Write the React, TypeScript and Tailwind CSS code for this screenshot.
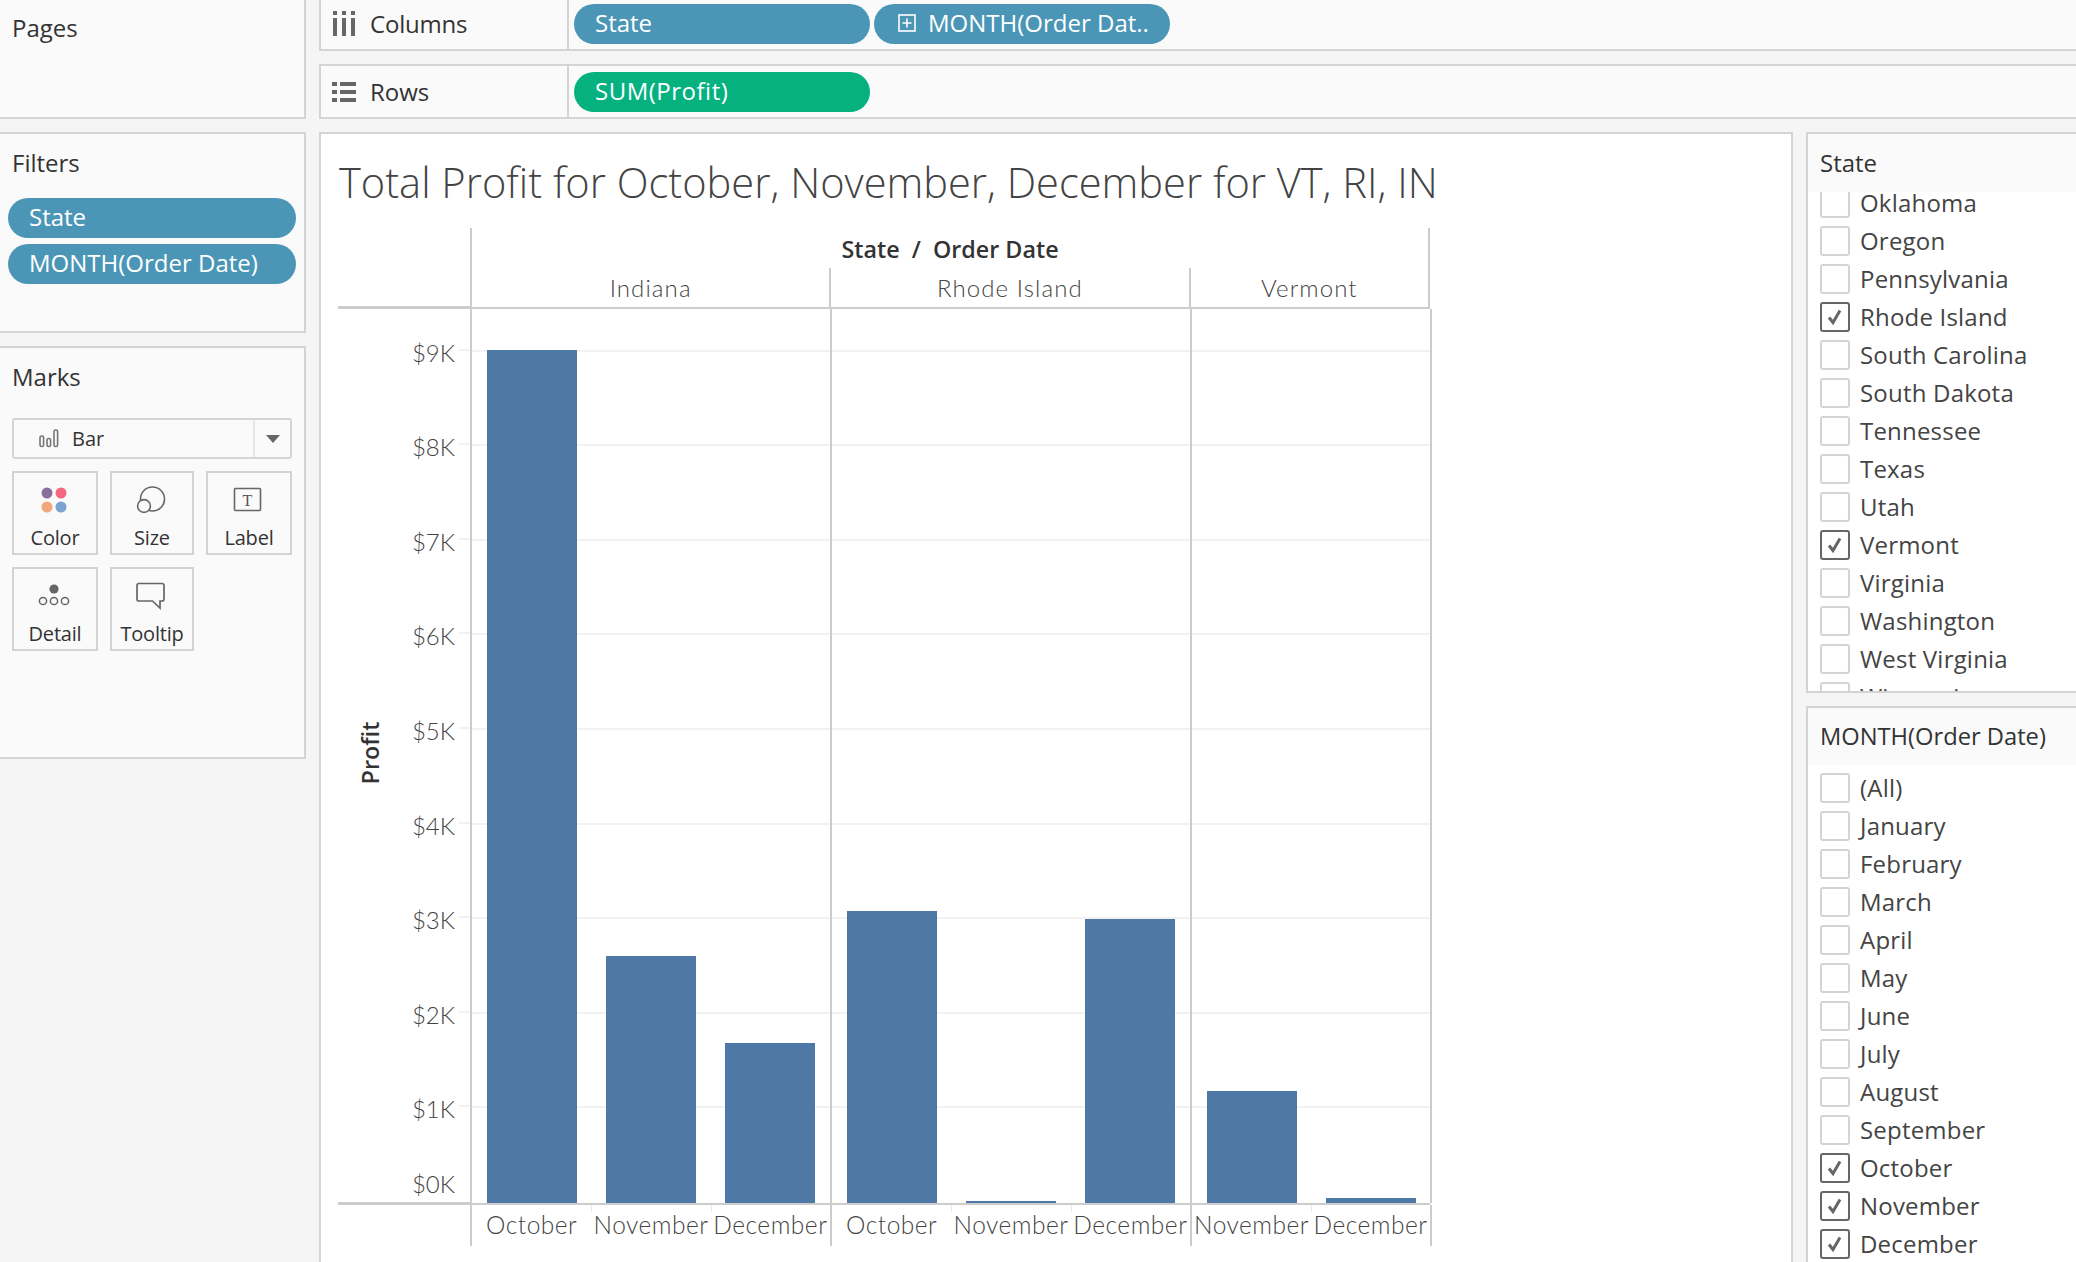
import React from 'react';

const stateRows = [
  { name: 'Oklahoma', on: false },
  { name: 'Oregon', on: false },
  { name: 'Pennsylvania', on: false },
  { name: 'Rhode Island', on: true },
  { name: 'South Carolina', on: false },
  { name: 'South Dakota', on: false },
  { name: 'Tennessee', on: false },
  { name: 'Texas', on: false },
  { name: 'Utah', on: false },
  { name: 'Vermont', on: true },
  { name: 'Virginia', on: false },
  { name: 'Washington', on: false },
  { name: 'West Virginia', on: false },
  { name: 'Wisconsin', on: false },
];

const monthRows = [
  { name: '(All)', on: false },
  { name: 'January', on: false },
  { name: 'February', on: false },
  { name: 'March', on: false },
  { name: 'April', on: false },
  { name: 'May', on: false },
  { name: 'June', on: false },
  { name: 'July', on: false },
  { name: 'August', on: false },
  { name: 'September', on: false },
  { name: 'October', on: true },
  { name: 'November', on: true },
  { name: 'December', on: true },
];

const panes = [
  { name: 'Indiana', width: 360, bars: [{ m: 'October', h: 853 }, { m: 'November', h: 247 }, { m: 'December', h: 160 }] },
  { name: 'Rhode Island', width: 360, bars: [{ m: 'October', h: 292 }, { m: 'November', h: 2 }, { m: 'December', h: 284 }] },
  { name: 'Vermont', width: 240, bars: [{ m: 'November', h: 112 }, { m: 'December', h: 5 }] },
];

const ticks = [9, 8, 7, 6, 5, 4, 3, 2, 1, 0];
const PER_K = 94.6;

const Row: React.FC<{ name: string; on: boolean }> = ({ name, on }) => (
  <div className="h-[38px] flex items-start pl-[12px] shrink-0">
    <div className={`w-[30px] h-[30px] rounded-[3px] border-2 bg-white flex items-center justify-center shrink-0 ${on ? 'border-[#666666]' : 'border-[#d4d4d4]'}`}>
      {on && (
        <svg width="20" height="20" viewBox="0 0 20 20">
          <path d="M4 10.5 L8 15.5 L15 3.5" fill="none" stroke="#666666" strokeWidth="3" />
        </svg>
      )}
    </div>
    <span className="ml-[10px] text-[24px] leading-[30px] tracking-[0.2px] text-[#444444] whitespace-nowrap">{name}</span>
  </div>
);

const MarkCard: React.FC<{ label: string; children: React.ReactNode; w: string }> = ({ label, children, w }) => (
  <div className={`${w} h-[84px] border-2 border-[#d4d4d4] flex flex-col items-center`}>
    <div className="h-[46px] w-full flex items-center justify-center pt-[8px] pr-[2px]">{children}</div>
    <span className="text-[20px] leading-[26px] mt-[6px] tracking-[-0.2px] text-[#333333]">{label}</span>
  </div>
);

const Pill: React.FC<{ color: string; w: string; children: React.ReactNode }> = ({ color, w, children }) => (
  <div className={`${w} ${color} h-[40px] rounded-full flex items-center pl-[21px] pb-[2px] text-white text-[24px] whitespace-nowrap`}>
    {children}
  </div>
);

export default function App() {
  return (
    <div className="w-[2076px] h-[1262px] overflow-hidden bg-[#f5f5f5] flex text-[#333333] font-['Open_Sans',sans-serif]">
      {/* left column */}
      <div className="w-[306px] shrink-0 flex flex-col gap-[13px]">
        <div className="h-[119px] bg-[#fafafa] border-r-2 border-b-2 border-[#d4d4d4] pl-[12px] pt-[10px] text-[24px]">Pages</div>
        <div className="h-[201px] bg-[#fafafa] border-2 border-l-0 border-[#d4d4d4]">
          <div className="pl-[12px] pt-[12px] text-[24px] leading-[34px] h-[64px]">Filters</div>
          <div className="pl-[8px] flex flex-col gap-[6px]">
            <Pill color="bg-[#4b96b6]" w="w-[288px]">State</Pill>
            <Pill color="bg-[#4b96b6]" w="w-[288px]">MONTH(Order Date)</Pill>
          </div>
        </div>
        <div className="h-[413px] bg-[#fafafa] border-2 border-l-0 border-[#d4d4d4] pl-[12px]">
          <div className="pt-[12px] text-[24px] leading-[34px] h-[70px]">Marks</div>
          <div className="w-[280px] h-[41px] border-2 border-[#d4d4d4] rounded-[3px] flex items-center">
            <div className="w-[241px] h-full border-r-2 border-[#e6e6e6] flex items-center pl-[25px]">
              <svg width="20" height="19" viewBox="0 0 20 19" fill="none" stroke="#777777" strokeWidth="1.6">
                <rect x="1" y="7" width="3.6" height="10.5" rx="1.6" />
                <rect x="8" y="9.5" width="3.6" height="8" rx="1.6" />
                <rect x="15" y="1" width="3.6" height="16.5" rx="1.6" />
              </svg>
              <span className="ml-[13px] text-[20px] text-[#333333]">Bar</span>
            </div>
            <div className="flex-1 flex items-center justify-center">
              <div className="w-0 h-0 border-l-[7px] border-r-[7px] border-t-[8px] border-l-transparent border-r-transparent border-t-[#666666]" />
            </div>
          </div>
          <div className="mt-[12px] flex gap-[12px]">
            <MarkCard label="Color" w="w-[86px]">
              <svg width="28" height="28" viewBox="0 0 28 28">
                <circle cx="7" cy="7" r="5.5" fill="#8a6f9e" />
                <circle cx="21" cy="7" r="5.5" fill="#f5667f" />
                <circle cx="7" cy="21" r="5.5" fill="#f2a67c" />
                <circle cx="21" cy="21" r="5.5" fill="#7ba3cf" />
              </svg>
            </MarkCard>
            <MarkCard label="Size" w="w-[84px]">
              <svg width="30" height="28" viewBox="0 0 30 28" fill="none" stroke="#666666" strokeWidth="1.6">
                <circle cx="16.5" cy="13" r="12" />
                <circle cx="8" cy="20" r="6.4" fill="#fafafa" />
              </svg>
            </MarkCard>
            <MarkCard label="Label" w="w-[86px]">
              <svg width="30" height="26" viewBox="0 0 30 26">
                <rect x="1.5" y="1.5" width="26" height="22" rx="1" fill="none" stroke="#666666" strokeWidth="1.6" />
                <text x="14.5" y="19" textAnchor="middle" fontSize="16" fill="#555555" fontFamily="Liberation Serif, serif">T</text>
              </svg>
            </MarkCard>
          </div>
          <div className="mt-[12px] flex gap-[12px]">
            <MarkCard label="Detail" w="w-[86px]">
              <svg width="32" height="24" viewBox="0 0 32 24">
                <circle cx="16" cy="5" r="4.6" fill="#666666" />
                <g fill="none" stroke="#666666" strokeWidth="1.5">
                  <circle cx="5" cy="17" r="3.6" />
                  <circle cx="16" cy="17" r="3.6" />
                  <circle cx="27" cy="17" r="3.6" />
                </g>
              </svg>
            </MarkCard>
            <MarkCard label="Tooltip" w="w-[84px]">
              <svg width="30" height="28" viewBox="0 0 30 28" fill="none" stroke="#666666" strokeWidth="1.7">
                <path d="M3 1.5 H26 Q28 1.5 28 3.5 V17 Q28 19 26 19 H24 V26 L16.5 19 H3 Q1 19 1 17 V3.5 Q1 1.5 3 1.5 Z" />
              </svg>
            </MarkCard>
          </div>
        </div>
      </div>

      {/* right of the left column */}
      <div className="ml-[13px] flex-1 min-w-0 flex flex-col">
        <div className="h-[51px] bg-[#fafafa] border-l-2 border-b-2 border-[#d4d4d4] flex">
          <div className="w-[248px] shrink-0 border-r-2 border-[#d4d4d4] flex items-center pl-[11px] pb-[2px]">
            <svg width="24" height="26" viewBox="0 0 24 26" fill="#666666">
              <rect x="1" y="0" width="4" height="4" />
              <rect x="10" y="0" width="4" height="4" />
              <rect x="19" y="0" width="4" height="4" />
              <rect x="1" y="7" width="4" height="18" />
              <rect x="10" y="7" width="4" height="18" />
              <rect x="19" y="7" width="4" height="18" />
            </svg>
            <span className="ml-[14px] text-[24px] tracking-[-0.2px]">Columns</span>
          </div>
          <div className="flex items-start pt-[4px] pl-[5px] gap-[4px]">
            <Pill color="bg-[#4b96b6]" w="w-[296px]">State</Pill>
            <Pill color="bg-[#4b96b6]" w="w-[296px]">
              <svg className="mr-[12px] ml-[3px]" width="18" height="18" viewBox="0 0 18 18" fill="none" stroke="#ffffff" strokeWidth="1.6">
                <rect x="1" y="1" width="16" height="16" />
                <path d="M9 4.5 V13.5 M4.5 9 H13.5" />
              </svg>
              MONTH(Order Dat..
            </Pill>
          </div>
        </div>
        <div className="mt-[13px] h-[55px] bg-[#fafafa] border-l-2 border-t-2 border-b-2 border-[#d4d4d4] flex">
          <div className="w-[248px] shrink-0 border-r-2 border-[#d4d4d4] flex items-center pl-[11px]">
            <svg width="24" height="22" viewBox="0 0 24 22" fill="#666666">
              <rect x="0" y="1" width="5" height="4" />
              <rect x="8" y="1" width="16" height="4" />
              <rect x="0" y="9" width="5" height="4" />
              <rect x="8" y="9" width="16" height="4" />
              <rect x="0" y="17" width="5" height="4" />
              <rect x="8" y="17" width="16" height="4" />
            </svg>
            <span className="ml-[14px] text-[24px]">Rows</span>
          </div>
          <div className="pt-[6px] pl-[5px]">
            <Pill color="bg-[#05b27f]" w="w-[296px]">
              <span className="tracking-[0.5px]">SUM(Profit)</span>
            </Pill>
          </div>
        </div>

        <div className="mt-[13px] flex-1 min-h-0 flex">
          {/* view */}
          <div className="w-[1474px] shrink-0 bg-white border-2 border-b-0 border-[#d4d4d4] pl-[17px] overflow-hidden">
            <div className="h-[94px] pt-[21px] pl-[1px] font-light text-[41.6px] leading-[54px] text-[#444444] whitespace-nowrap">
              Total Profit for October, November, December for VT, RI, IN
            </div>
            <div className="flex flex-col w-[1093px] font-['Lato',sans-serif]">
              {/* headers */}
              <div className="flex">
                <div className="w-[132px] h-[81px] shrink-0 border-b-[3px] border-[#cccccc]" />
                <div className="w-[960px] border-l-2 border-[#cccccc]">
                  <div className="h-[40px] pt-[2px] border-r-2 border-[#cccccc] flex items-center justify-center font-['Open_Sans',sans-serif] text-[23.3px] font-semibold text-[#333333]">
                    State&nbsp;&nbsp;/&nbsp;&nbsp;Order Date
                  </div>
                  <div className="flex h-[41px] border-b-2 border-[#cccccc]">
                    {panes.map(p => (
                      <div key={p.name} style={{ width: p.width }} className="border-r-2 border-[#cccccc] flex items-center justify-center text-[24px] font-light tracking-[1.1px] text-[#444444]">
                        {p.name}
                      </div>
                    ))}
                  </div>
                </div>
              </div>
              {/* plot */}
              <div className="flex h-[896px]">
                <div className="w-[132px] shrink-0 relative border-b-[3px] border-[#cccccc]">
                  <span className="absolute left-[32px] top-[444px] -translate-x-1/2 -translate-y-1/2 -rotate-90 font-['Open_Sans',sans-serif] text-[23.3px] font-semibold text-[#333333]">Profit</span>
                  {ticks.map(t => (
                    <span
                      key={t}
                      style={{ bottom: t === 0 ? 1 : t * PER_K - 19 }}
                      className="absolute right-[15px] text-[24px] leading-[34px] font-light text-[#444444]"
                    >
                      ${t}K
                    </span>
                  ))}
                  {ticks.slice(0, 9).map(t => (
                    <div key={t} style={{ bottom: t * PER_K }} className="absolute right-0 w-[11px] h-[2px] bg-[#f2f2f2]" />
                  ))}
                </div>
                <div className="w-[960px] flex border-l-2 border-b-[2px] border-[#cccccc]">
                  {panes.map(p => (
                    <div key={p.name} style={{ width: p.width }} className="relative border-r-2 border-[#cccccc] flex items-end">
                      {ticks.slice(0, 9).map(t => (
                        <div key={t} style={{ bottom: t * PER_K }} className="absolute left-0 right-0 h-[2px] bg-[#f2f2f2]" />
                      ))}
                      {p.bars.map(b => (
                        <div key={b.m} className="relative w-[120px] flex justify-center items-end">
                          <div style={{ height: b.h }} className="w-[90px] bg-[#4e79a7]" />
                        </div>
                      ))}
                    </div>
                  ))}
                </div>
              </div>
              {/* month labels */}
              <div className="flex h-[41px]">
                <div className="w-[132px] shrink-0" />
                <div className="w-[960px] flex border-l-2 border-[#cccccc]">
                  {panes.map(p => (
                    <div key={p.name} style={{ width: p.width }} className="border-r-2 border-[#cccccc] flex">
                      {p.bars.map((b, i) => (
                        <div key={b.m} className="relative w-[120px] flex items-center justify-center text-[24.5px] font-light tracking-[0.5px] text-[#444444] whitespace-nowrap">
                          {i > 0 && <div className="absolute left-0 top-0 w-[1px] h-[7px] bg-[#e8e8e8]" />}
                          {b.m}
                        </div>
                      ))}
                    </div>
                  ))}
                </div>
              </div>
            </div>
          </div>

          {/* quick filters */}
          <div className="ml-[13px] flex-1 min-w-0 flex flex-col gap-[13px]">
            <div className="h-[561px] bg-white border-2 border-r-0 border-[#d4d4d4] flex flex-col overflow-hidden">
              <div className="h-[58px] shrink-0 bg-[#fafafa] pl-[12px] flex items-center text-[24px] text-[#333333]">State</div>
              <div className="flex-1 min-h-0 overflow-hidden">
                <div className="-mt-[4px] flex flex-col">
                  {stateRows.map(r => <Row key={r.name} name={r.name} on={r.on} />)}
                </div>
              </div>
            </div>
            <div className="flex-1 min-h-0 bg-white border-2 border-r-0 border-b-0 border-[#d4d4d4] flex flex-col overflow-hidden">
              <div className="h-[57px] shrink-0 bg-[#fafafa] pl-[12px] flex items-center text-[23.7px] text-[#333333]">MONTH(Order Date)</div>
              <div className="pt-[8px] flex flex-col">
                {monthRows.map(r => <Row key={r.name} name={r.name} on={r.on} />)}
              </div>
            </div>
          </div>
        </div>
      </div>
    </div>
  );
}
